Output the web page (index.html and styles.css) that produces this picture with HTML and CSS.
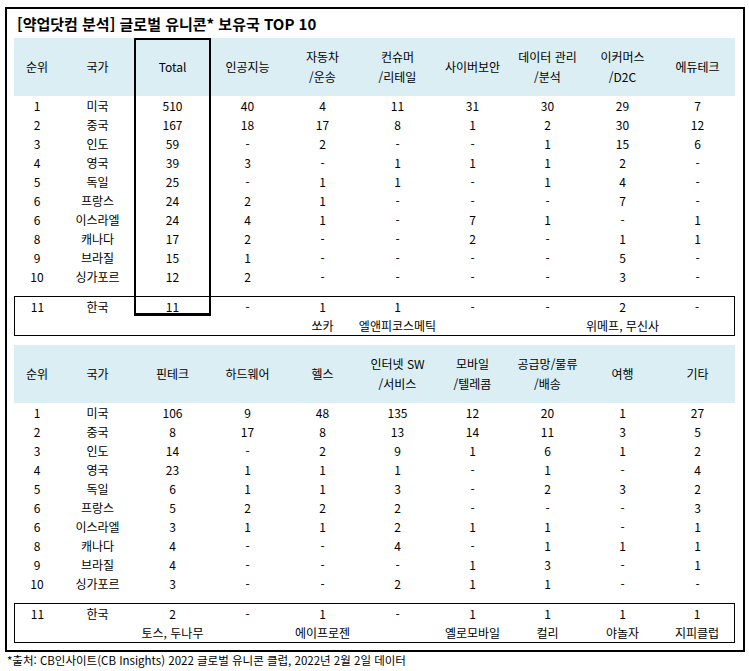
FILE: index.html
```html
<!DOCTYPE html>
<html lang="ko">
<head>
<meta charset="utf-8">
<title>글로벌 유니콘 보유국 TOP 10</title>
<link rel="stylesheet" href="styles.css">
</head>
<body>
<div class="frame">
  <div class="title">[약업닷컴 분석] 글로벌 유니콘* 보유국 TOP 10</div>

  <section class="block">
    <div class="grid thead">
      <div>순위</div><div>국가</div><div>Total</div><div>인공지능</div><div>자동차<br>/운송</div><div>컨슈머<br>/리테일</div><div>사이버보안</div><div>데이터 관리<br>/분석</div><div>이커머스<br>/D2C</div><div>에듀테크</div>
    </div>
    <div class="grid tbody">
      <div>1</div><div>미국</div><div>510</div><div>40</div><div>4</div><div>11</div><div>31</div><div>30</div><div>29</div><div>7</div>
      <div>2</div><div>중국</div><div>167</div><div>18</div><div>17</div><div>8</div><div>1</div><div>2</div><div>30</div><div>12</div>
      <div>3</div><div>인도</div><div>59</div><div>-</div><div>2</div><div>-</div><div>-</div><div>1</div><div>15</div><div>6</div>
      <div>4</div><div>영국</div><div>39</div><div>3</div><div>-</div><div>1</div><div>1</div><div>1</div><div>2</div><div>-</div>
      <div>5</div><div>독일</div><div>25</div><div>-</div><div>1</div><div>1</div><div>-</div><div>1</div><div>4</div><div>-</div>
      <div>6</div><div>프랑스</div><div>24</div><div>2</div><div>1</div><div>-</div><div>-</div><div>-</div><div>7</div><div>-</div>
      <div>6</div><div>이스라엘</div><div>24</div><div>4</div><div>1</div><div>-</div><div>7</div><div>1</div><div>-</div><div>1</div>
      <div>8</div><div>캐나다</div><div>17</div><div>2</div><div>-</div><div>-</div><div>2</div><div>-</div><div>1</div><div>1</div>
      <div>9</div><div>브라질</div><div>15</div><div>1</div><div>-</div><div>-</div><div>-</div><div>-</div><div>5</div><div>-</div>
      <div>10</div><div>싱가포르</div><div>12</div><div>2</div><div>-</div><div>-</div><div>-</div><div>-</div><div>3</div><div>-</div>
    </div>
    <div class="grid korea">
      <div>11</div><div>한국</div><div>11</div><div>-</div><div>1</div><div>1</div><div>-</div><div>-</div><div>2</div><div>-</div>
      <div></div><div></div><div></div><div></div><div>쏘카</div><div>엘앤피코스메틱</div><div></div><div></div><div>위메프, 무신사</div><div></div>
    </div>
    <div class="total-box"></div>
  </section>

  <section class="block block2">
    <div class="grid thead">
      <div>순위</div><div>국가</div><div>핀테크</div><div>하드웨어</div><div>헬스</div><div>인터넷 SW<br>/서비스</div><div>모바일<br>/텔레콤</div><div>공급망/물류<br>/배송</div><div>여행</div><div>기타</div>
    </div>
    <div class="grid tbody">
      <div>1</div><div>미국</div><div>106</div><div>9</div><div>48</div><div>135</div><div>12</div><div>20</div><div>1</div><div>27</div>
      <div>2</div><div>중국</div><div>8</div><div>17</div><div>8</div><div>13</div><div>14</div><div>11</div><div>3</div><div>5</div>
      <div>3</div><div>인도</div><div>14</div><div>-</div><div>2</div><div>9</div><div>1</div><div>6</div><div>1</div><div>2</div>
      <div>4</div><div>영국</div><div>23</div><div>1</div><div>1</div><div>1</div><div>-</div><div>1</div><div>-</div><div>4</div>
      <div>5</div><div>독일</div><div>6</div><div>1</div><div>1</div><div>3</div><div>-</div><div>2</div><div>3</div><div>2</div>
      <div>6</div><div>프랑스</div><div>5</div><div>2</div><div>2</div><div>2</div><div>-</div><div>-</div><div>-</div><div>3</div>
      <div>6</div><div>이스라엘</div><div>3</div><div>1</div><div>1</div><div>2</div><div>1</div><div>1</div><div>-</div><div>1</div>
      <div>8</div><div>캐나다</div><div>4</div><div>-</div><div>-</div><div>4</div><div>-</div><div>1</div><div>1</div><div>1</div>
      <div>9</div><div>브라질</div><div>4</div><div>-</div><div>-</div><div>-</div><div>1</div><div>3</div><div>-</div><div>1</div>
      <div>10</div><div>싱가포르</div><div>3</div><div>-</div><div>-</div><div>2</div><div>1</div><div>1</div><div>-</div><div>-</div>
    </div>
    <div class="grid korea">
      <div>11</div><div>한국</div><div>2</div><div>-</div><div>1</div><div>-</div><div>1</div><div>1</div><div>1</div><div>1</div>
      <div></div><div></div><div>토스, 두나무</div><div></div><div>에이프로젠</div><div></div><div>옐로모바일</div><div>컬리</div><div>야놀자</div><div>지피클럽</div>
    </div>
  </section>
</div>
<p class="note">*출처: CB인사이트(CB Insights) 2022 글로벌 유니콘 클럽, 2022년 2월 2일 데이터</p>
</body>
</html>
```

FILE: styles.css
```css
* {
  box-sizing: border-box;
}

html, body {
  margin: 0;
  padding: 0;
  background: #ffffff;
}

body {
  font-family: "Noto Sans CJK KR", "Noto Sans", sans-serif;
  font-size: 12px;
  color: #000000;
}

.frame {
  margin: 7px 0 0 5px;
  width: 740px;
  border: 2px solid #000000;
  padding: 0 8px 7px 7px;
}

.title {
  height: 29px;
  line-height: 29px;
  padding-left: 3px;
  font-size: 15px;
  font-weight: 700;
  white-space: nowrap;
}

.block {
  position: relative;
}

.block2 {
  margin-top: 9px;
}

.grid {
  display: grid;
  grid-template-columns: 46px repeat(9, 75px);
}

.grid > div {
  justify-self: center;
  text-align: center;
  white-space: nowrap;
}

.thead {
  height: 58px;
  background: #daeef3;
  align-items: center;
  line-height: 20px;
}

.tbody {
  grid-auto-rows: 19px;
  line-height: 19px;
}

.korea {
  margin-top: 10px;
  border: 1px solid #000000;
  grid-template-columns: 45px repeat(8, 75px) 74px;
  grid-auto-rows: 19px;
  line-height: 19px;
}

.total-box {
  position: absolute;
  top: 0;
  left: 120px;
  width: 77px;
  height: 278px;
  border: 2px solid #000000;
  border-bottom-width: 3px;
  pointer-events: none;
}

.note {
  margin: 0;
  padding-left: 7px;
  line-height: 16px;
  font-size: 11.5px;
  white-space: nowrap;
}
```
